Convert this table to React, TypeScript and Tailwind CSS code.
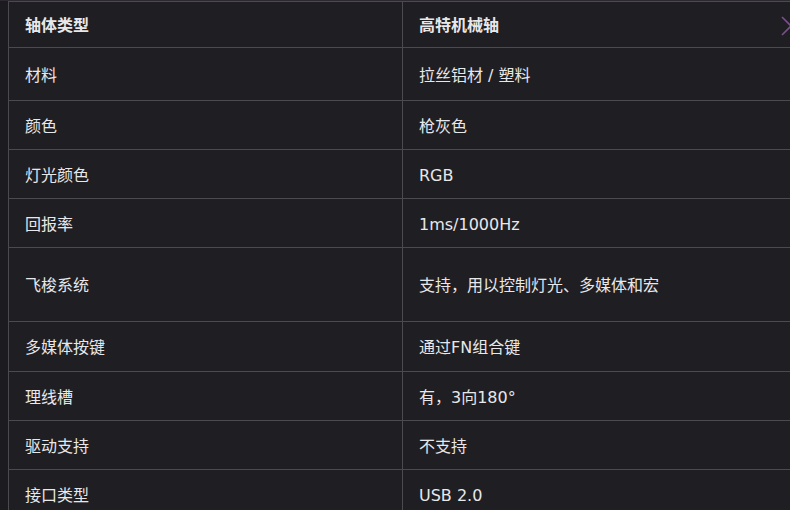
const rows: { label: string; value: string; h: string; head?: boolean }[] = [
  { label: "轴体类型", value: "高特机械轴", h: "h-[46px]", head: true },
  { label: "材料", value: "拉丝铝材 / 塑料", h: "h-[53px]" },
  { label: "颜色", value: "枪灰色", h: "h-[49px]" },
  { label: "灯光颜色", value: "RGB", h: "h-[49px]" },
  { label: "回报率", value: "1ms/1000Hz", h: "h-[49px]" },
  { label: "飞梭系统", value: "支持，用以控制灯光、多媒体和宏", h: "h-[74px]" },
  { label: "多媒体按键", value: "通过FN组合键", h: "h-[50px]" },
  { label: "理线槽", value: "有，3向180°", h: "h-[49px]" },
  { label: "驱动支持", value: "不支持", h: "h-[49px]" },
  { label: "接口类型", value: "USB 2.0", h: "h-[49px]" },
];

export default function App() {
  return (
    <div
      className="relative w-[790px] h-[510px] overflow-hidden bg-[#1c1b20] text-[#e8e8ea] text-[16px]"
      style={{ fontFamily: '"DejaVu Sans", "Noto Sans CJK SC", sans-serif' }}
    >
      <div className="h-px bg-[#2c2a30]" />
      <div className="ml-[8px] w-[820px] border-t border-l border-[#4a4a4f] bg-[#1f1e23]">
        {rows.map((r) => (
          <div key={r.label} className={`flex border-b border-[#4a4a4f] ${r.h}`}>
            <div className={`w-[394px] shrink-0 flex items-center pl-4 pt-[3px] border-r border-[#4a4a4f] ${r.head ? "font-bold" : ""}`}>
              {r.label}
            </div>
            <div className={`flex-1 flex items-center pl-4 pt-[3px] ${r.head ? "font-bold" : ""}`}>{r.value}</div>
          </div>
        ))}
      </div>
      <svg className="absolute left-[781px] top-[16px]" width="20" height="20" viewBox="0 0 20 20">
        <path d="M1 1 L19 19 M19 1 L1 19" stroke="#7b4f8c" strokeWidth="1.6" fill="none" />
      </svg>
    </div>
  );
}
